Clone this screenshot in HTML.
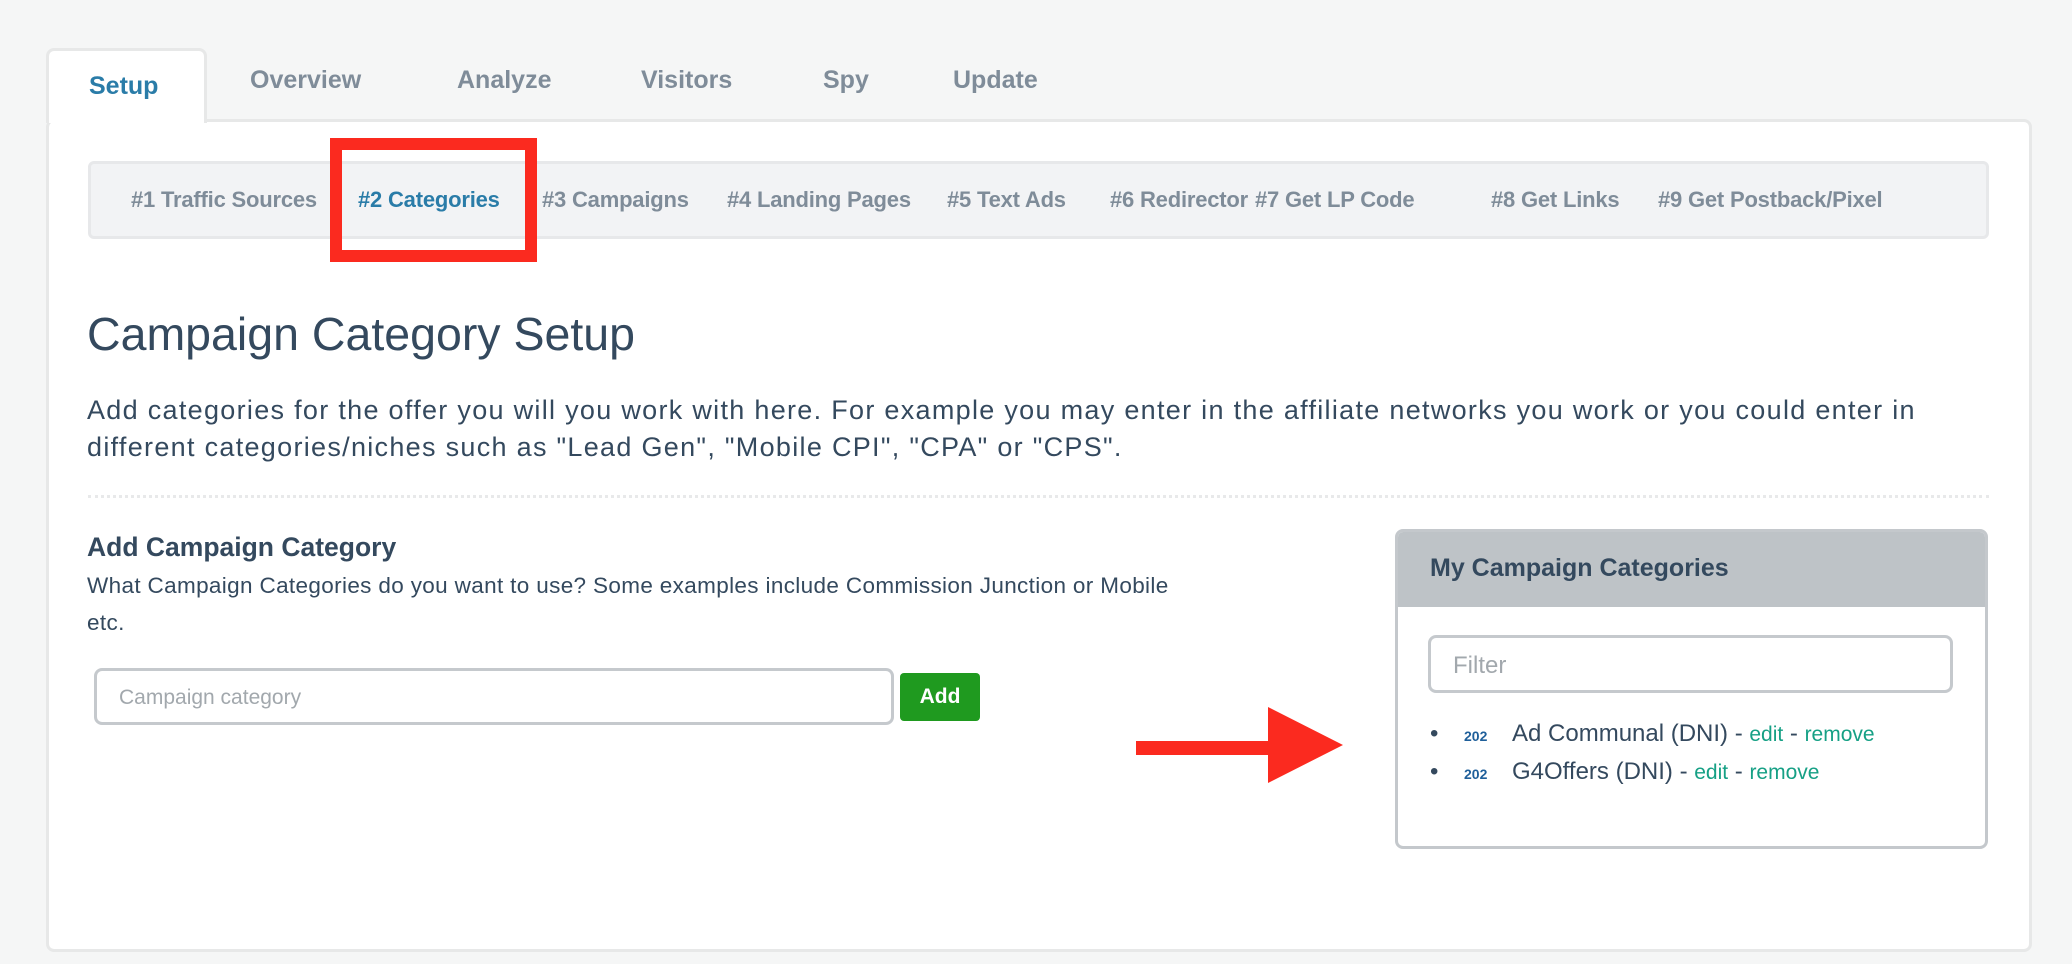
<!DOCTYPE html>
<html><head><meta charset="utf-8"><style>
*{margin:0;padding:0;box-sizing:border-box}
body{width:2072px;height:964px;background:#f5f6f6;font-family:"Liberation Sans",sans-serif;color:#34495e;position:relative;overflow:hidden}
.a{position:absolute;white-space:nowrap}
.tab{position:absolute;top:66px;font-size:25px;font-weight:bold;color:#7f8c99}
.sub{position:absolute;top:187px;font-size:22px;font-weight:bold;color:#7f8c99;letter-spacing:-0.2px}
</style></head><body>
<div class="a" style="left:46px;top:119px;width:1986px;height:833px;background:#fff;border:3px solid #e7e8e8;border-radius:8px"></div>
<div class="a" style="left:46px;top:48px;width:161px;height:75px;background:#fff;border:3px solid #e7e8e8;border-bottom:none;border-radius:8px 8px 0 0"></div>
<div class="a" style="left:49px;top:115px;width:155px;height:8px;background:#fff"></div>
<div class="tab" style="left:89px;top:72px;color:#2a7ca8">Setup</div>
<div class="tab" style="left:250px">Overview</div>
<div class="tab" style="left:457px">Analyze</div>
<div class="tab" style="left:641px">Visitors</div>
<div class="tab" style="left:823px">Spy</div>
<div class="tab" style="left:953px">Update</div>

<div class="a" style="left:88px;top:161px;width:1901px;height:78px;background:#f2f3f5;border:3px solid #e7e8ea;border-radius:6px"></div>
<div class="sub" style="left:131px">#1 Traffic Sources</div>
<div class="sub" style="left:358px;color:#2a7ca8">#2 Categories</div>
<div class="sub" style="left:542px">#3 Campaigns</div>
<div class="sub" style="left:727px">#4 Landing Pages</div>
<div class="sub" style="left:947px">#5 Text Ads</div>
<div class="sub" style="left:1110px">#6 Redirector</div>
<div class="sub" style="left:1255px">#7 Get LP Code</div>
<div class="sub" style="left:1491px">#8 Get Links</div>
<div class="sub" style="left:1658px">#9 Get Postback/Pixel</div>
<div class="a" style="left:330px;top:138px;width:207px;height:124px;border:12px solid #fb2a1f"></div>

<div class="a" style="left:87px;top:307px;font-size:46.5px;color:#34495e">Campaign Category Setup</div>
<div class="a" style="left:87px;top:392px;font-size:27px;line-height:37px;letter-spacing:1.3px;white-space:normal;width:1830px">Add categories for the offer you will you work with here. For example you may enter in the affiliate networks you work or you could enter in<br>different categories/niches such as "Lead Gen", "Mobile CPI", "CPA" or "CPS".</div>
<div class="a" style="left:88px;top:495px;width:1901px;border-top:3px dotted #e8e9ea"></div>
<div class="a" style="left:87px;top:532px;font-size:26.5px;font-weight:bold">Add Campaign Category</div>
<div class="a" style="left:87px;top:567px;font-size:22.5px;line-height:37px;letter-spacing:0.35px;white-space:normal;width:1100px">What Campaign Categories do you want to use? Some examples include Commission Junction or Mobile<br>etc.</div>
<div class="a" style="left:94px;top:668px;width:800px;height:57px;border:3px solid #c5c9cd;border-radius:8px;font-size:21px;color:#a2a8ad;padding:15px 0 0 22px">Campaign category</div>
<div class="a" style="left:900px;top:673px;width:80px;height:48px;background:#1f9a1f;border-radius:4px;color:#fff;font-size:21px;font-weight:bold;text-align:center;line-height:48px">Add</div>

<div class="a" style="left:1136px;top:741px;width:134px;height:14px;background:#fb2a1f"></div>
<svg class="a" style="left:1268px;top:707px" width="76" height="76"><polygon points="0,0 75,38 0,76" fill="#fb2a1f"/></svg>

<div class="a" style="left:1395px;top:529px;width:593px;height:320px;border:3px solid #c4c8cc;border-radius:8px;background:#fff;overflow:hidden">
<div style="height:75px;background:#bec3c7;font-size:25px;font-weight:bold;padding:22px 0 0 32px;color:#34495e">My Campaign Categories</div>
</div>
<div class="a" style="left:1428px;top:635px;width:525px;height:58px;border:3px solid #c5c9cd;border-radius:8px;font-size:24px;color:#a2a8ad;padding:14px 0 0 22px">Filter</div>
<div class="a" style="left:1430px;top:716px;font-size:24px;line-height:36px">
<div><span style="display:inline-block;width:34px">•</span><span style="font-size:14px;font-weight:bold;color:#1f5f9a;display:inline-block;width:48px">202</span>Ad Communal (DNI) - <span style="color:#16a085;font-size:21px">edit</span> - <span style="color:#16a085;font-size:21px">remove</span></div>
<div><span style="display:inline-block;width:34px">•</span><span style="font-size:14px;font-weight:bold;color:#1f5f9a;display:inline-block;width:48px">202</span>G4Offers (DNI) - <span style="color:#16a085;font-size:21px">edit</span> - <span style="color:#16a085;font-size:21px">remove</span></div>
</div>
</body></html>
